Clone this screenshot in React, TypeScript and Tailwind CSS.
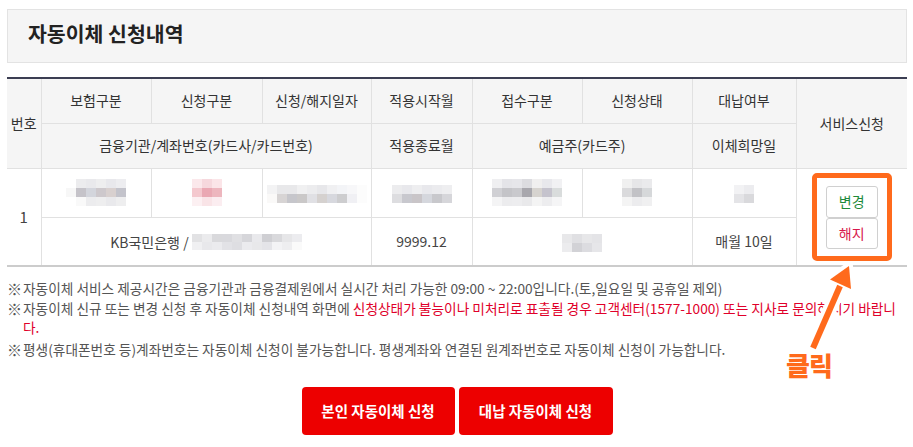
import type { ReactNode } from "react";

type Grid = string[][];

const blur = {
  insurance: [
    ["#ffffff", "#ececee", "#e9e9ec", "#eeeeef", "#e8e8ec", "#ededf0"],
    ["#f7f7f7", "#c5c3c9", "#d3d5dc", "#cdc8cc", "#d8d0cf", "#c3c3cb"],
    ["#ffffff", "#f9f9f9", "#ececee", "#eeeeef", "#e9e9ec", "#eeeeef"],
  ],
  kind: [
    ["#fbe8eb", "#f6d8dd", "#fbe5e8"],
    ["#f4c8ce", "#eaa8b3", "#edb6be"],
    ["#fcf0f2", "#f9e4e7", "#fbedf0"],
  ],
  date: [
    ["#f3f3f4", "#e8e8ea", "#e8e8ea", "#f0f0f1", "#ececee", "#e7e7ea", "#f0f0f2", "#f3f4f7", "#f7f7f9", "#fcfcfc"],
    ["#faf9f8", "#d7d4d4", "#c6c6cb", "#cac8c8", "#e0e0e4", "#d5d1cf", "#d7d8de", "#cdcdcf", "#f0f0f4", "#fcfcfc"],
  ],
  start: [
    ["#ececee", "#e8e8ec", "#eeeef0", "#e8e8ec", "#ebebee", "#eeeef0"],
    ["#dddde0", "#c8c8ce", "#c9c5c8", "#d5d7dd", "#c8c8cc", "#d6d6da"],
  ],
  receipt: [
    ["#efeff1", "#e4e4e8", "#e6e6ea", "#dcdce0", "#f0efef", "#e8e8ec", "#f1f1f3"],
    ["#d0d0d4", "#c4c4c8", "#c9c9cd", "#a8a7ad", "#d6d3cf", "#c5c3cd", "#d9dcdc"],
    ["#f4f4f5", "#ececee", "#ededef", "#e9e9eb", "#f4f4f4", "#ededef", "#f5f5f6"],
  ],
  status: [
    ["#f0f0f0", "#e6e6e8", "#eaeaec"],
    ["#dadadc", "#c2c2c6", "#d6d8da"],
    ["#f4f4f4", "#ececee", "#f0f0f1"],
  ],
  proxy: [
    ["#f2f2f4", "#ececef"],
    ["#e4e4e7", "#d9d9dc"],
  ],
  account: [
    ["#e2e2e4", "#ebebed", "#d9d9dc", "#d9d9dd", "#e0e0e3", "#d6d6da", "#e9e9ec", "#cfcfd3", "#d9d9dc", "#e6e6e8", "#ececef"],
    ["#f0f0f2", "#e8e8eb", "#ebebee", "#e2e2e6", "#dedee2", "#ebebee", "#e8e8ea", "#e4e4e8", "#f3f3f5", "#eeeef0", "#fafafa"],
  ],
  owner: [
    ["#e8e8ea", "#e0e0e3", "#e7e7e9", "#e4e4e7"],
    ["#ececee", "#d2d2d6", "#dcdce0", "#e6e6e9"],
  ],
};

// masked personal data, drawn as a pixel mosaic
function Mosaic({ grid, small }: { grid: Grid; small?: boolean }) {
  return (
    <span className="inline-flex flex-col align-middle">
      {grid.map((row, i) => (
        <span key={i} className="flex">
          {row.map((c, j) => (
            <span
              key={j}
              className={small ? "block h-[8px] w-[10px]" : "block h-[9px] w-[10px]"}
              style={{ backgroundColor: c }}
            />
          ))}
        </span>
      ))}
    </span>
  );
}

const base = "border border-[#e1e1e1] text-center align-middle";

function Th({ children, className = "", ...rest }: { children: ReactNode; className?: string; rowSpan?: number; colSpan?: number }) {
  return (
    <th className={`${base} bg-[#f5f5f5] font-normal text-[#333] ${className}`} {...rest}>
      {children}
    </th>
  );
}

function Td({ children, className = "", ...rest }: { children?: ReactNode; className?: string; rowSpan?: number; colSpan?: number }) {
  return (
    <td className={`${base} text-[#444] ${className}`} {...rest}>
      {children}
    </td>
  );
}

function Mark() {
  return <span className="w-[16px] shrink-0 text-[15px]">※</span>;
}

export default function App() {
  return (
    <div className="relative h-[447px] w-[913px] overflow-hidden bg-white pl-[7px] pr-[6px] pt-[9px] font-['Noto_Sans_CJK_KR',sans-serif] text-[#555]">
      <div className="flex h-[54px] items-center border border-[#e3e3e3] bg-[#f5f5f5] pb-[6px] pl-[20px]">
        <h2 className="text-[20.5px] font-bold leading-none text-[#222]">자동이체 신청내역</h2>
      </div>

      <table className="mt-[14px] w-[900px] table-fixed border-collapse border-t-2 border-b-2 border-t-[#3b3e52] border-b-[#cccccc] text-[14px]">
        <colgroup>
          <col className="w-[34px]" />
          <col className="w-[110px]" />
          <col className="w-[111px]" />
          <col className="w-[109px]" />
          <col className="w-[101px]" />
          <col className="w-[110px]" />
          <col className="w-[110px]" />
          <col className="w-[104px]" />
          <col className="w-[111px]" />
        </colgroup>
        <thead>
          <tr className="h-[45px]">
            <Th rowSpan={2} className="border-l-0">번호</Th>
            <Th>보험구분</Th>
            <Th>신청구분</Th>
            <Th>신청/해지일자</Th>
            <Th>적용시작월</Th>
            <Th>접수구분</Th>
            <Th>신청상태</Th>
            <Th>대납여부</Th>
            <Th rowSpan={2} className="border-r-0">서비스신청</Th>
          </tr>
          <tr className="h-[45px]">
            <Th colSpan={3}>금융기관/계좌번호(카드사/카드번호)</Th>
            <Th>적용종료월</Th>
            <Th colSpan={2}>예금주(카드주)</Th>
            <Th>이체희망일</Th>
          </tr>
        </thead>
        <tbody>
          <tr className="h-[49px]">
            <Td rowSpan={2} className="border-l-0 text-[15px]">1</Td>
            <Td><Mosaic grid={blur.insurance} /></Td>
            <Td><Mosaic grid={blur.kind} /></Td>
            <Td><Mosaic grid={blur.date} /></Td>
            <Td><Mosaic grid={blur.start} /></Td>
            <Td><Mosaic grid={blur.receipt} /></Td>
            <Td><Mosaic grid={blur.status} /></Td>
            <Td><Mosaic grid={blur.proxy} /></Td>
            <Td rowSpan={2} className="border-r-0">
              <div className="inline-flex flex-col rounded-[5px] border-[5px] border-[#ff6a1c] px-[9px] pb-[7px] pt-[8px] align-middle">
                <button className="h-[32px] w-[52px] rounded-[3px] border border-[#d0d0d0] bg-white text-[14px] text-[#1e8a3a]">
                  변경
                </button>
                <button className="h-[31px] w-[52px] rounded-[3px] border border-[#d0d0d0] bg-white text-[14px] text-[#d8174c]">
                  해지
                </button>
              </div>
            </Td>
          </tr>
          <tr className="h-[49px]">
            <Td colSpan={3}>
              <span className="align-middle">KB국민은행 / </span>
              <Mosaic grid={blur.account} small />
            </Td>
            <Td>9999.12</Td>
            <Td colSpan={2}><Mosaic grid={blur.owner} /></Td>
            <Td>매월 10일</Td>
          </tr>
        </tbody>
      </table>

      <ul className="mt-[12px] text-[13.7px] leading-[19.5px] text-[#555]">
        <li className="flex">
          <Mark />
          <span className="whitespace-nowrap">
            자동이체 서비스 제공시간은 금융기관과 금융결제원에서 실시간 처리 가능한 09:00 ~ 22:00입니다.(토,일요일 및 공휴일 제외)
          </span>
        </li>
        <li className="flex">
          <Mark />
          <span>
            <span className="whitespace-nowrap">
              자동이체 신규 또는 변경 신청 후 자동이체 신청내역 화면에{" "}
              <span className="text-[#e0002a]">
                신청상태가 불능이나 미처리로 표출될 경우 고객센터(1577-1000) 또는 지사로 문의하시기 바랍니
              </span>
            </span>
            <br />
            <span className="text-[#e0002a]">다.</span>
          </span>
        </li>
        <li className="mt-[2px] flex">
          <Mark />
          <span className="whitespace-nowrap">
            평생(휴대폰번호 등)계좌번호는 자동이체 신청이 불가능합니다. 평생계좌와 연결된 원계좌번호로 자동이체 신청이 가능합니다.
          </span>
        </li>
      </ul>

      <div className="mt-[28px] flex justify-center gap-[4px]">
        <button className="h-[48px] w-[153px] rounded-[4px] bg-[#ed0000] text-[14.5px] font-bold text-white">
          본인 자동이체 신청
        </button>
        <button className="h-[48px] w-[154px] rounded-[4px] bg-[#ed0000] text-[14.5px] font-bold text-white">
          대납 자동이체 신청
        </button>
      </div>

      {/* annotation: arrow pointing at the buttons */}
      <svg className="absolute left-[780px] top-[255px]" width="90" height="105" viewBox="0 0 90 105">
        <line x1="33" y1="93" x2="60" y2="31" stroke="#fff" strokeWidth="14" strokeLinecap="round" />
        <polygon points="69,11 50,24.5 71,34" fill="#fff" stroke="#fff" strokeWidth="8" strokeLinejoin="round" />
        <line x1="33" y1="93" x2="60" y2="31" stroke="#ff6a1c" strokeWidth="6" />
        <polygon points="69,11 50,24.5 71,34" fill="#ff6a1c" />
      </svg>
      <div className="absolute left-[786px] top-[352px] text-[26px] font-black leading-none tracking-[-1px] text-[#ff6a1c]">
        클릭
      </div>
    </div>
  );
}
